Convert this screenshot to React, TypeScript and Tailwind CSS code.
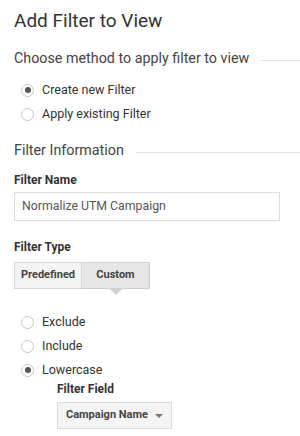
import React from "react";

const Radio = ({ checked }: { checked?: boolean }) => (
  <span className="w-[13px] h-[13px] rounded-full border border-[#c8c8c8] bg-white flex items-center justify-center shrink-0">
    {checked && <span className="w-[6px] h-[6px] rounded-full bg-[#555]" />}
  </span>
);

const RadioRow = ({ label, checked }: { label: string; checked?: boolean }) => (
  <div className="flex items-center gap-[8px] h-[24px] pl-[21px]">
    <Radio checked={checked} />
    <span className="text-[12.5px] text-[#333]">{label}</span>
  </div>
);

const SectionTitle = ({ title }: { title: string }) => (
  <div className="flex items-center h-[20px]">
    <span className="text-[14.3px] text-[#444]">{title}</span>
    <span className="flex-1 border-t border-[#e2e2e2] ml-[12px] mt-[3px]" />
  </div>
);

export default function App() {
  return (
    <div
      className="w-[300px] h-[436px] bg-white pl-[14px] overflow-hidden"
      style={{ fontFamily: "Roboto, 'Liberation Sans', sans-serif" }}
    >
      <h1 className="text-[19px] text-[#333] pt-[8px] leading-[26px]">Add Filter to View</h1>

      <div className="mt-[15px]">
        <SectionTitle title="Choose method to apply filter to view" />
      </div>

      <div className="mt-[9px] -ml-[14px]">
        <RadioRow label="Create new Filter" checked />
        <RadioRow label="Apply existing Filter" />
      </div>

      <div className="mt-[15px]">
        <SectionTitle title="Filter Information" />
      </div>

      <div className="mt-[12px] text-[12px] leading-[14px] font-bold text-[#333]">Filter Name</div>
      <div className="mt-[5px] w-[266px] h-[29px] border border-[#dcdcdc] flex items-center pl-[7px] text-[12.3px] text-[#555]">
        Normalize UTM Campaign
      </div>

      <div className="mt-[19px] text-[12px] leading-[14px] font-bold text-[#333]">Filter Type</div>
      <div className="mt-[8px] flex">
        <div className="w-[68px] h-[27px] border border-[#d6d6d6] bg-[#f4f4f4] flex items-center justify-center text-[11px] font-bold text-[#444]">
          Predefined
        </div>
        <div className="relative w-[68px] h-[27px] border border-l-0 border-[#cfcfcf] bg-[#e6e6e6] flex items-center justify-center text-[11px] font-bold text-[#444]">
          Custom
          <span className="absolute left-1/2 -translate-x-1/2 top-full w-0 h-0 border-l-[7px] border-r-[7px] border-t-[7px] border-l-transparent border-r-transparent border-t-[#d0d0d0]" />
        </div>
      </div>

      <div className="mt-[21px] -ml-[14px]">
        <RadioRow label="Exclude" />
        <RadioRow label="Include" />
        <RadioRow label="Lowercase" checked />
      </div>

      <div className="pl-[43px]">
        <div className="text-[12px] font-bold text-[#333] leading-[14px]">Filter Field</div>
        <div className="mt-[6px] w-[115px] h-[27px] border border-[#dadada] bg-[#f4f4f4] flex items-center pl-[8px] pr-[8px] text-[11px] font-bold text-[#444]">
          <span className="flex-1">Campaign Name</span>
          <span className="w-0 h-0 border-l-[4px] border-r-[4px] border-t-[4px] border-l-transparent border-r-transparent border-t-[#777]" />
        </div>
      </div>
    </div>
  );
}
